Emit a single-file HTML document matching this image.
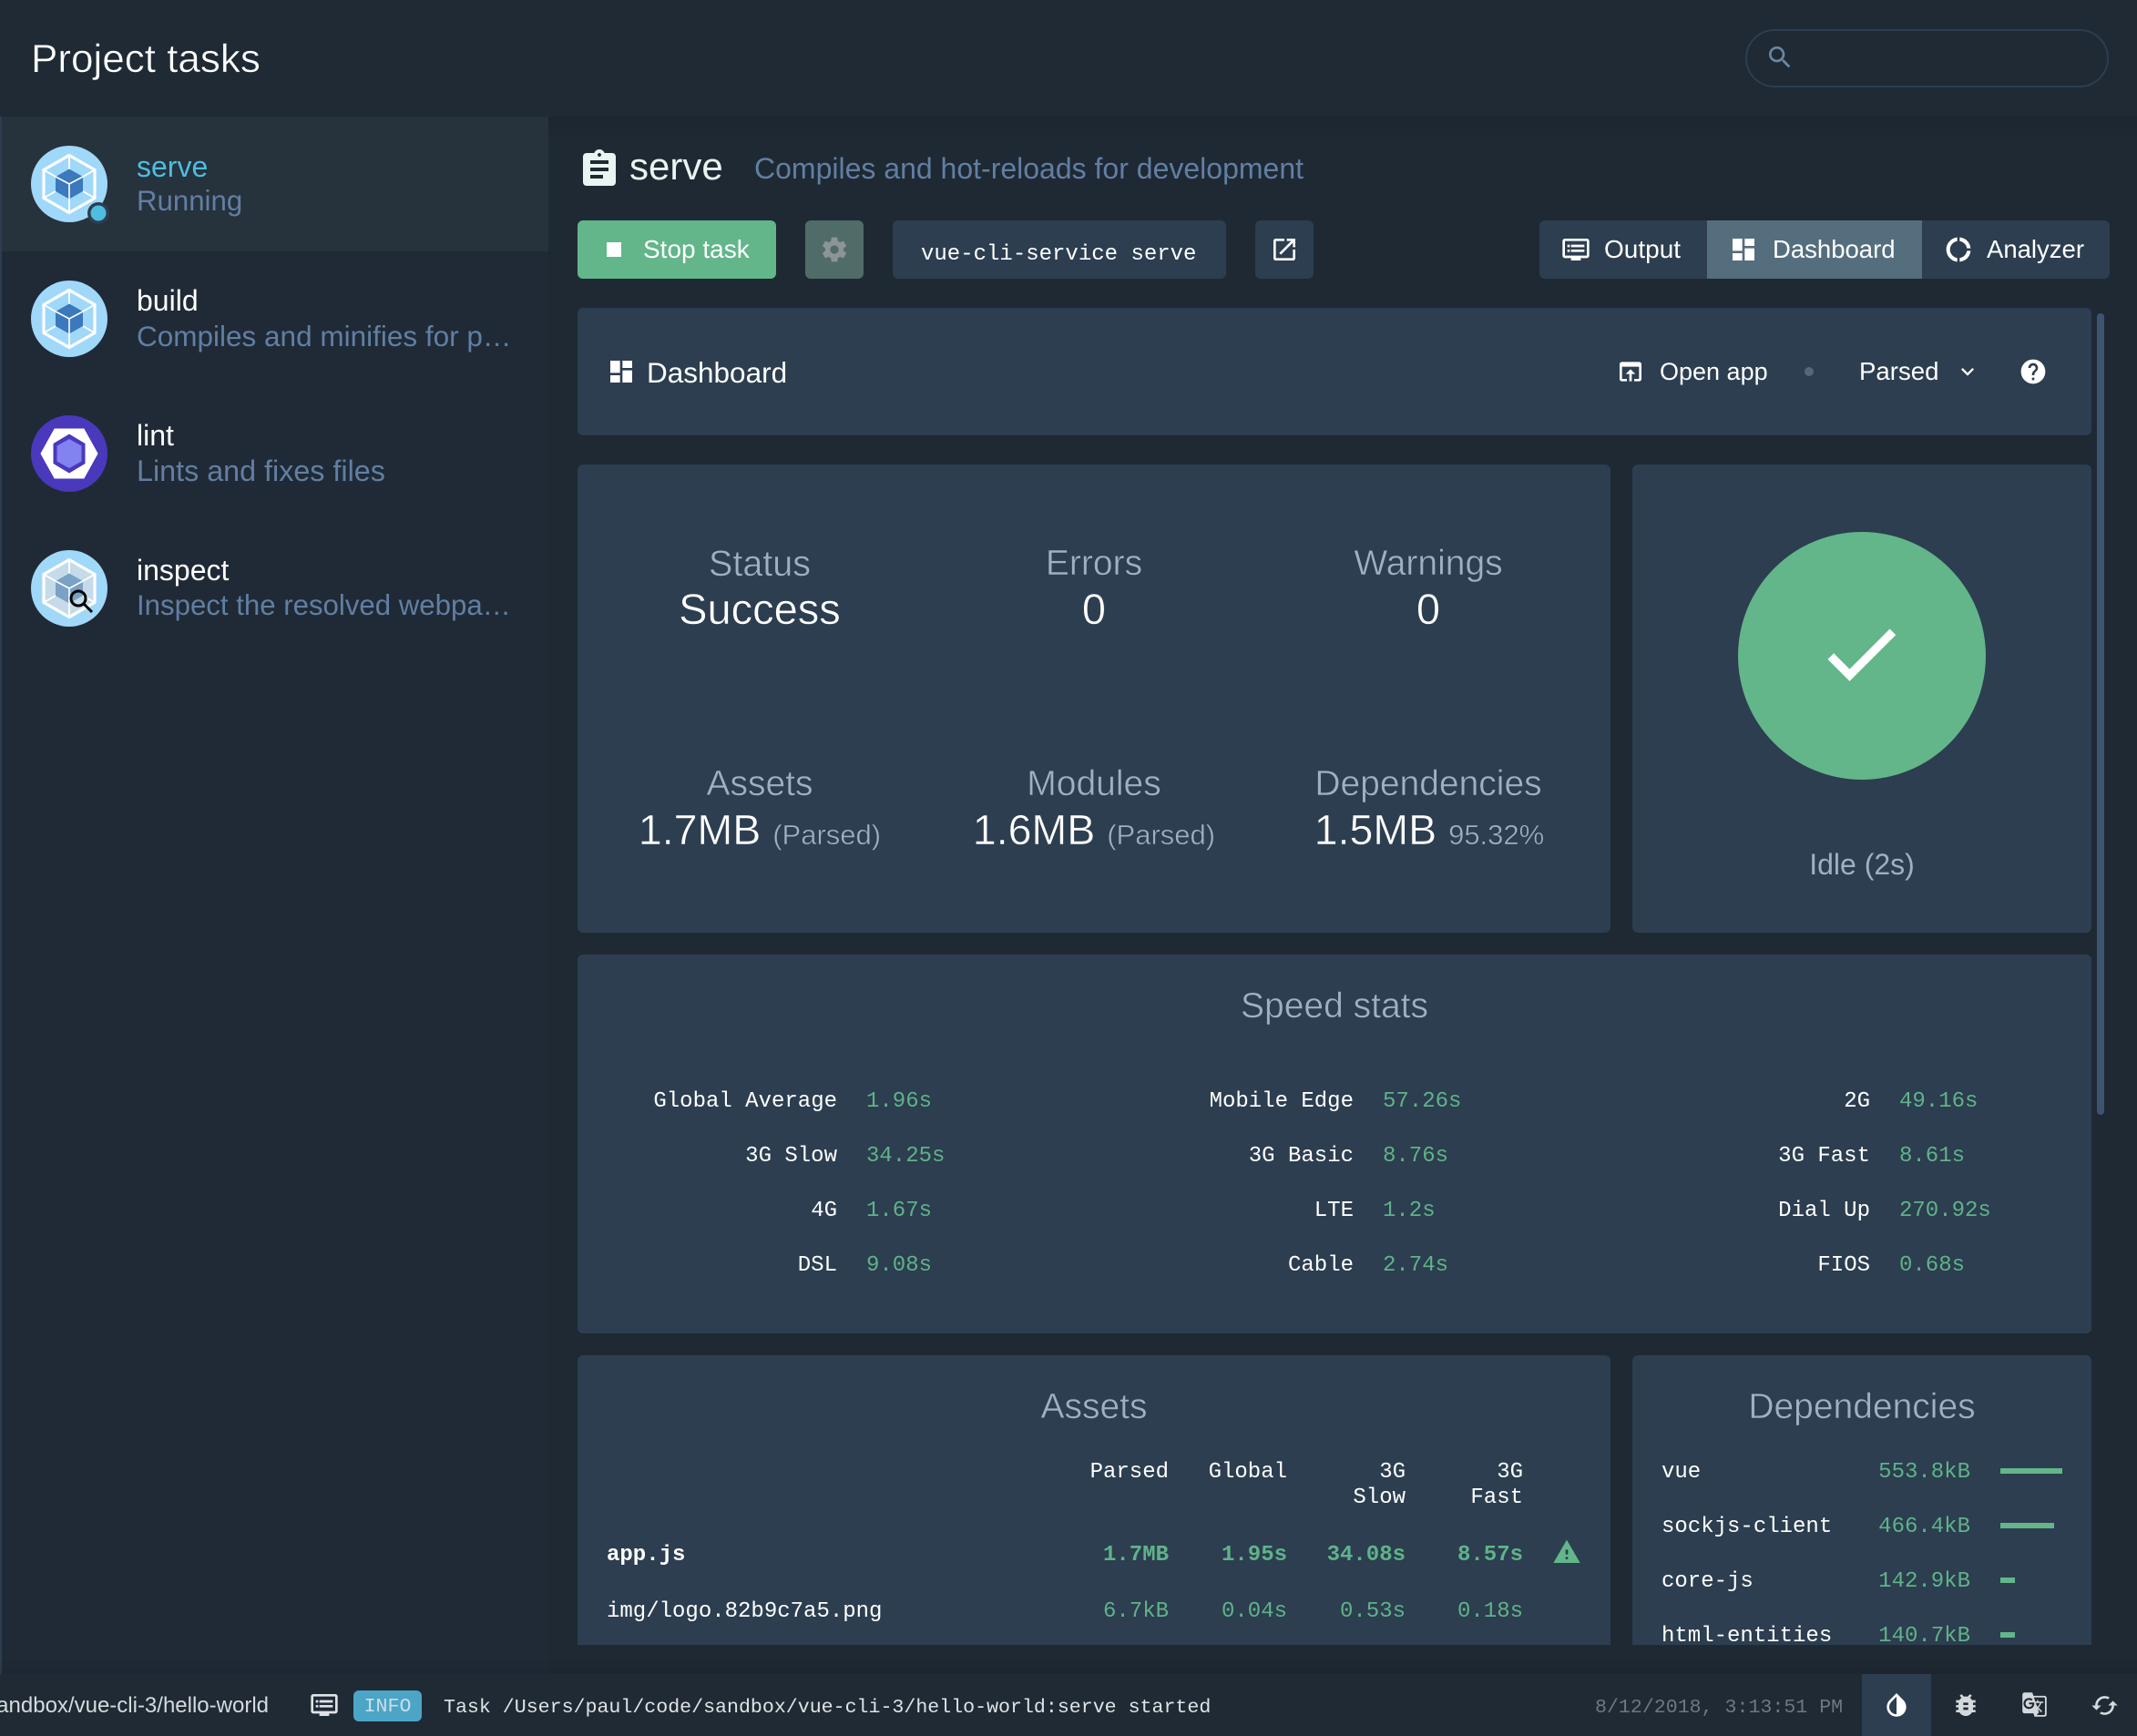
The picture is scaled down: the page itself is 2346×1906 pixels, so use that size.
<!DOCTYPE html>
<html><head><meta charset="utf-8"><title>Project tasks</title>
<style>
html,body{margin:0;padding:0;background:#1f2933;}
body{width:2346px;height:1906px;position:relative;overflow:hidden;font-family:"Liberation Sans",sans-serif;color:#fff;}
.a{position:absolute;white-space:nowrap;}
.c{text-align:center;}
.r{text-align:right;}
.m{font-family:"Liberation Mono",monospace;font-size:24px;line-height:28px;}
.p{background:#2c3e50;border-radius:6px;position:absolute;}
.g{color:#5fb388;}
.lab{font-size:39px;line-height:50px;color:#9fb0c2;-webkit-text-stroke:.5px #2c3e50;}
.val{font-size:47px;line-height:60px;color:#fff;-webkit-text-stroke:.5px #2c3e50;}
.val2{font-size:46.5px;line-height:60px;color:#fff;-webkit-text-stroke:.5px #2c3e50;}
.val2 span{font-size:31px;color:#9fb0c2;}
.h{font-size:39px;line-height:50px;color:#9fb0c2;-webkit-text-stroke:.5px #2c3e50;}
.tt{font-size:32px;line-height:40px;}
.st{font-size:32px;line-height:40px;color:#617fa3;}
.bt{font-size:28px;line-height:40px;}
svg{position:absolute;display:block;}
</style></head><body>

<!-- sidebar -->
<div class="a" style="left:0;top:128px;width:602px;height:1710px;background:#202a36;"></div>
<div class="a" style="left:0;top:128px;width:2px;height:1710px;background:#2c3e50;"></div>
<div class="a" style="left:2px;top:128px;width:600px;height:148px;background:#26323c;"></div>
<!-- shadows -->
<div class="a" style="left:602px;top:128px;width:1744px;height:24px;background:linear-gradient(#1c2530,#1f2933);"></div>
<div class="a" style="left:0;top:1818px;width:2346px;height:20px;background:linear-gradient(rgba(0,0,0,0),rgba(0,0,0,.08));"></div>

<!-- top bar -->
<div class="a" style="left:0;top:0;width:2346px;height:128px;background:#1f2a35;"></div>
<div class="a" style="left:34px;top:40px;font-size:44px;line-height:50px;color:#fff;-webkit-text-stroke:.5px #1f2a35;">Project tasks</div>
<div class="a" style="left:1916px;top:32px;width:395px;height:60px;border:2px solid #2c3e50;border-radius:32px;"></div>
<svg style="left:1938px;top:47px" width="32" height="32" viewBox="0 0 24 24" fill="#6a87a6"><path d="M15.5 14h-.79l-.28-.27C15.41 12.59 16 11.11 16 9.5 16 5.91 13.09 3 9.5 3S3 5.91 3 9.5 5.91 16 9.5 16c1.61 0 3.09-.59 4.23-1.57l.27.28v.79l5 4.99L20.49 19l-4.99-5zm-6 0C7.01 14 5 11.99 5 9.5S7.01 5 9.5 5 14 7.01 14 9.5 11.99 14 9.5 14z"/></svg>

<!-- sidebar icons -->
<svg style="left:34px;top:160px" width="88" height="88" viewBox="-42 -42 88 88">
<circle r="42" fill="#a0d8fa"/>
<g stroke="#fff" fill="none"><path d="M0-31.5L28-15.5V15.5L0 31.5-28 15.5V-15.5Z" stroke-width="3.2"/><path d="M0-31.5V-16M28-15.5L15-8M28 15.5L15 8M0 31.5V16M-28 15.5L-15 8M-28-15.5L-15-8" stroke-width="1.8"/></g>
<path d="M0-16.5L15-8V8L0 16.5-15 8V-8Z" fill="#3b78bc"/><path d="M-15-8L0 0 15-8M0 0V16.5" stroke="#fff" stroke-width="1.6" fill="none"/>
<circle cx="32" cy="32" r="12" fill="#2c3e50"/><circle cx="32" cy="32" r="8.5" fill="#4fbde0"/>
</svg>
<svg style="left:34px;top:308px" width="84" height="84" viewBox="-42 -42 84 84">
<circle r="42" fill="#a0d8fa"/>
<g stroke="#fff" fill="none"><path d="M0-31.5L28-15.5V15.5L0 31.5-28 15.5V-15.5Z" stroke-width="3.2"/><path d="M0-31.5V-16M28-15.5L15-8M28 15.5L15 8M0 31.5V16M-28 15.5L-15 8M-28-15.5L-15-8" stroke-width="1.8"/></g>
<path d="M0-16.5L15-8V8L0 16.5-15 8V-8Z" fill="#3b78bc"/><path d="M-15-8L0 0 15-8M0 0V16.5" stroke="#fff" stroke-width="1.6" fill="none"/>
</svg>
<svg style="left:34px;top:456px" width="84" height="84" viewBox="-42 -42 84 84">
<circle r="42" fill="#4a38bd"/>
<path d="M-31 0L-16-27H16L31 0 16 27H-16Z" fill="#fff" stroke="#fff" stroke-width="1"/>
<path d="M0-21.5L17.5-11V11L0 21.5-17.5 11V-11Z" fill="#4a38bd"/>
<path d="M0-16L13.5-8.5V8.5L0 16-13.5 8.5V-8.5Z" fill="#8282f0"/>
</svg>
<svg style="left:34px;top:604px" width="92" height="92" viewBox="-42 -42 92 92">
<circle r="42" fill="#a0d8fa"/>
<path d="M0-31.5L28-15.5V15.5L0 31.5-28 15.5V-15.5Z" fill="#c5dbe9"/>
<g stroke="#fff" fill="none"><path d="M0-31.5L28-15.5V15.5L0 31.5-28 15.5V-15.5Z" stroke-width="3.2"/><path d="M0-31.5V-16M28-15.5L15-8M28 15.5L15 8M0 31.5V16M-28 15.5L-15 8M-28-15.5L-15-8" stroke-width="1.8"/></g>
<path d="M0-16.5L15-8V8L0 16.5-15 8V-8Z" fill="#7aa1c6"/><path d="M-15-8L0 0 15-8M0 0V16.5" stroke="#fff" stroke-width="1.6" fill="none"/>
<circle cx="10" cy="11" r="8" fill="none" stroke="#000" stroke-width="3"/><path d="M16 17L25 26" stroke="#000" stroke-width="3"/>
</svg>

<!-- sidebar text -->
<div class="a tt" style="left:150px;top:163px;color:#4dbde0;">serve</div>
<div class="a st" style="left:150px;top:201px;font-size:31.2px;">Running</div>
<div class="a tt" style="left:150px;top:310px;">build</div>
<div class="a st" style="left:150px;top:349px;font-size:31.5px;">Compiles and minifies for p…</div>
<div class="a tt" style="left:150px;top:458px;">lint</div>
<div class="a st" style="left:150px;top:497px;font-size:32.3px;">Lints and fixes files</div>
<div class="a tt" style="left:150px;top:606px;">inspect</div>
<div class="a st" style="left:150px;top:645px;font-size:31.2px;">Inspect the resolved webpa…</div>

<!-- header -->
<svg style="left:634px;top:162px" width="48" height="48" viewBox="0 0 24 24" fill="#e8f5f0"><path d="M19 3h-4.18C14.4 1.84 13.3 1 12 1c-1.3 0-2.4.84-2.82 2H5c-1.1 0-2 .9-2 2v14c0 1.1.9 2 2 2h14c1.1 0 2-.9 2-2V5c0-1.1-.9-2-2-2zm-7 0c.55 0 1 .45 1 1s-.45 1-1 1-1-.45-1-1 .45-1 1-1zm2 14H7v-2h7v2zm3-4H7v-2h10v2zm0-4H7V7h10v2z"/></svg>
<div class="a" style="left:691px;top:158px;font-size:42px;line-height:50px;color:#e8f5f0;">serve</div>
<div class="a" style="left:828px;top:165px;font-size:32px;line-height:40px;color:#617fa3;">Compiles and hot-reloads for development</div>

<!-- action buttons -->
<div class="p" style="left:634px;top:242px;width:218px;height:64px;background:#62b68a;"></div>
<div class="a" style="left:666px;top:266px;width:16px;height:16px;background:#fff;"></div>
<div class="a bt" style="left:706px;top:254px;">Stop task</div>
<div class="p" style="left:884px;top:242px;width:64px;height:64px;background:#506c68;"></div>
<svg style="left:900px;top:258px" width="32" height="32" viewBox="0 0 24 24" fill="#8c9498"><path d="M19.43 12.98c.04-.32.07-.64.07-.98s-.03-.66-.07-.98l2.11-1.65c.19-.15.24-.42.12-.64l-2-3.46c-.12-.22-.39-.3-.61-.22l-2.49 1c-.52-.4-1.08-.73-1.69-.98l-.38-2.65C14.46 2.18 14.25 2 14 2h-4c-.25 0-.46.18-.49.42l-.38 2.65c-.61.25-1.17.59-1.69.98l-2.49-1c-.23-.09-.49 0-.61.22l-2 3.46c-.13.22-.07.49.12.64l2.11 1.65c-.04.32-.07.65-.07.98s.03.66.07.98l-2.11 1.65c-.19.15-.24.42-.12.64l2 3.46c.12.22.39.3.61.22l2.49-1c.52.4 1.08.73 1.69.98l.38 2.65c.03.24.24.42.49.42h4c.25 0 .46-.18.49-.42l.38-2.65c.61-.25 1.17-.59 1.69-.98l2.49 1c.23.09.49 0 .61-.22l2-3.46c.12-.22.07-.49-.12-.64l-2.11-1.65zM12 15.5c-1.93 0-3.5-1.57-3.5-3.5s1.57-3.5 3.5-3.5 3.5 1.57 3.5 3.5-1.57 3.5-3.5 3.5z"/></svg>
<div class="p" style="left:980px;top:242px;width:366px;height:64px;"></div>
<div class="a m" style="left:1011px;top:266px;">vue-cli-service serve</div>
<div class="p" style="left:1378px;top:242px;width:64px;height:64px;"></div>
<svg style="left:1394px;top:258px" width="32" height="32" viewBox="0 0 24 24" fill="#fff"><path d="M19 19H5V5h7V3H5c-1.11 0-2 .9-2 2v14c0 1.1.89 2 2 2h14c1.1 0 2-.9 2-2v-7h-2v7zM14 3v2h3.59l-9.83 9.83 1.41 1.41L19 6.41V10h2V3h-7z"/></svg>

<!-- tabs -->
<div class="p" style="left:1690px;top:242px;width:626px;height:64px;"></div>
<div class="a" style="left:1874px;top:242px;width:236px;height:64px;background:#546e7e;"></div>
<svg style="left:1714px;top:258px" width="32" height="32" viewBox="0 0 24 24" fill="#fff"><path d="M21 3H3c-1.1 0-2 .9-2 2v12c0 1.1.9 2 2 2h5v2h8v-2h5c1.1 0 1.99-.9 1.99-2L23 5c0-1.1-.9-2-2-2zm0 14H3V5h18v12zm-2-9H8v2h11V8zm0 4H8v2h11v-2zM7 8H5v2h2V8zm0 4H5v2h2v-2z"/></svg>
<div class="a bt" style="left:1761px;top:254px;">Output</div>
<svg style="left:1898px;top:258px" width="32" height="32" viewBox="0 0 24 24" fill="#fff"><path d="M3 13h8V3H3v10zm0 8h8v-6H3v6zm10 0h8V11h-8v10zm0-18v6h8V3h-8z"/></svg>
<div class="a" style="left:1946px;top:254px;font-size:27.5px;line-height:40px;">Dashboard</div>
<svg style="left:2134px;top:258px" width="32" height="32" viewBox="0 0 24 24" fill="#fff"><path d="M11 5.08V2c-5 .5-9 4.81-9 10s4 9.5 9 10v-3.08c-3-.48-6-3.19-6-6.92s3-6.44 6-6.92zM18.97 11H22c-.47-5-4-8.53-9-9v3.08C16 5.51 18.54 8 18.97 11zM13 18.92V22c5-.47 8.53-4 9-9h-3.03c-.43 3-2.97 5.49-5.97 5.92z"/></svg>
<div class="a" style="left:2181px;top:254px;font-size:27.5px;line-height:40px;">Analyzer</div>

<!-- scrollbar -->
<div class="a" style="left:2302px;top:344px;width:8px;height:880px;background:#3e5370;border-radius:4px;"></div>

<!-- dashboard panel -->
<div class="p" style="left:634px;top:338px;width:1662px;height:140px;"></div>
<svg style="left:666px;top:392px" width="32" height="32" viewBox="0 0 24 24" fill="#fff"><path d="M3 13h8V3H3v10zm0 8h8v-6H3v6zm10 0h8V11h-8v10zm0-18v6h8V3h-8z"/></svg>
<div class="a" style="left:710px;top:389px;font-size:31.5px;line-height:40px;">Dashboard</div>
<svg style="left:1774px;top:392px" width="32" height="32" viewBox="0 0 24 24" fill="#fff"><path d="M19 4H5c-1.11 0-2 .9-2 2v12c0 1.1.89 2 2 2h4v-2H5V8h14v10h-4v2h4c1.1 0 2-.9 2-2V6c0-1.1-.89-2-2-2zm-7 6l-4 4h3v6h2v-6h3l-4-4z"/></svg>
<div class="a" style="left:1822px;top:388px;font-size:27px;line-height:40px;">Open app</div>
<div class="a" style="left:1981px;top:403px;width:10px;height:10px;border-radius:50%;background:#566778;"></div>
<div class="a" style="left:2041px;top:388px;font-size:27.6px;line-height:40px;">Parsed</div>
<svg style="left:2146px;top:394px" width="28" height="28" viewBox="0 0 24 24" fill="#fff"><path d="M16.59 8.59L12 13.17 7.41 8.59 6 10l6 6 6-6z"/></svg>
<svg style="left:2216px;top:392px" width="32" height="32" viewBox="0 0 24 24" fill="#fff"><path d="M12 2C6.48 2 2 6.48 2 12s4.48 10 10 10 10-4.48 10-10S17.52 2 12 2zm1 17h-2v-2h2v2zm2.07-7.75l-.9.92C13.45 12.9 13 13.5 13 15h-2v-.5c0-1.1.45-2.1 1.17-2.83l1.24-1.26c.37-.36.59-.86.59-1.41 0-1.1-.9-2-2-2s-2 .9-2 2H8c0-2.21 1.79-4 4-4s4 1.79 4 4c0 .88-.36 1.68-.93 2.25z"/></svg>

<!-- status panel -->
<div class="p" style="left:634px;top:510px;width:1134px;height:514px;"></div>
<div class="a c lab" style="left:634px;top:594px;width:400px;font-size:39.5px;">Status</div>
<div class="a c lab" style="left:1001px;top:594px;width:400px;">Errors</div>
<div class="a c lab" style="left:1368px;top:594px;width:400px;">Warnings</div>
<div class="a c val" style="left:634px;top:639px;width:400px;">Success</div>
<div class="a c val" style="left:1001px;top:639px;width:400px;">0</div>
<div class="a c val" style="left:1368px;top:639px;width:400px;">0</div>
<div class="a c lab" style="left:634px;top:836px;width:400px;">Assets</div>
<div class="a c lab" style="left:1001px;top:836px;width:400px;">Modules</div>
<div class="a c lab" style="left:1368px;top:836px;width:400px;">Dependencies</div>
<div class="a c val2" style="left:634px;top:881px;width:400px;">1.7MB <span>(Parsed)</span></div>
<div class="a c val2" style="left:1001px;top:881px;width:400px;">1.6MB <span>(Parsed)</span></div>
<div class="a c val2" style="left:1369px;top:881px;width:400px;">1.5MB <span>95.32%</span></div>

<!-- idle panel -->
<div class="p" style="left:1792px;top:510px;width:504px;height:514px;"></div>
<div class="a" style="left:1908px;top:584px;width:272px;height:272px;border-radius:50%;background:#62b68a;"></div>
<svg style="left:1993px;top:668px" width="100" height="100" viewBox="0 0 24 24" fill="#fff" stroke="#fff" stroke-width=".25"><path d="M9 16.17L4.83 12l-1.41 1.41L9 19 21 7l-1.41-1.41z"/></svg>
<div class="a c" style="left:1792px;top:929px;width:504px;font-size:32px;line-height:40px;color:#9fb0c2;">Idle (2s)</div>

<!-- speed stats -->
<div class="p" style="left:634px;top:1048px;width:1662px;height:416px;"></div>
<div class="a c h" style="left:634px;top:1080px;width:1662px;">Speed stats</div>

<div class="a m r" style="left:619px;top:1196px;width:300px;">Global Average</div><div class="a m g" style="left:951px;top:1196px;">1.96s</div>
<div class="a m r" style="left:619px;top:1256px;width:300px;">3G Slow</div><div class="a m g" style="left:951px;top:1256px;">34.25s</div>
<div class="a m r" style="left:619px;top:1316px;width:300px;">4G</div><div class="a m g" style="left:951px;top:1316px;">1.67s</div>
<div class="a m r" style="left:619px;top:1376px;width:300px;">DSL</div><div class="a m g" style="left:951px;top:1376px;">9.08s</div>

<div class="a m r" style="left:1186px;top:1196px;width:300px;">Mobile Edge</div><div class="a m g" style="left:1518px;top:1196px;">57.26s</div>
<div class="a m r" style="left:1186px;top:1256px;width:300px;">3G Basic</div><div class="a m g" style="left:1518px;top:1256px;">8.76s</div>
<div class="a m r" style="left:1186px;top:1316px;width:300px;">LTE</div><div class="a m g" style="left:1518px;top:1316px;">1.2s</div>
<div class="a m r" style="left:1186px;top:1376px;width:300px;">Cable</div><div class="a m g" style="left:1518px;top:1376px;">2.74s</div>

<div class="a m r" style="left:1753px;top:1196px;width:300px;">2G</div><div class="a m g" style="left:2085px;top:1196px;">49.16s</div>
<div class="a m r" style="left:1753px;top:1256px;width:300px;">3G Fast</div><div class="a m g" style="left:2085px;top:1256px;">8.61s</div>
<div class="a m r" style="left:1753px;top:1316px;width:300px;">Dial Up</div><div class="a m g" style="left:2085px;top:1316px;">270.92s</div>
<div class="a m r" style="left:1753px;top:1376px;width:300px;">FIOS</div><div class="a m g" style="left:2085px;top:1376px;">0.68s</div>

<!-- assets panel -->
<div class="a" style="left:634px;top:1488px;width:1134px;height:318px;background:#2c3e50;border-radius:6px 6px 0 0;overflow:hidden;">
  <div class="a c h" style="left:0;top:32px;width:1134px;">Assets</div>
  <div class="a m r" style="left:449px;top:115px;width:200px;">Parsed</div>
  <div class="a m r" style="left:579px;top:115px;width:200px;">Global</div>
  <div class="a m r" style="left:709px;top:115px;width:200px;">3G<br>Slow</div>
  <div class="a m r" style="left:838px;top:115px;width:200px;">3G<br>Fast</div>
  <div class="a m" style="left:32px;top:206px;font-weight:bold;">app.js</div>
  <div class="a m r g" style="left:449px;top:206px;width:200px;font-weight:bold;">1.7MB</div>
  <div class="a m r g" style="left:579px;top:206px;width:200px;font-weight:bold;">1.95s</div>
  <div class="a m r g" style="left:709px;top:206px;width:200px;font-weight:bold;">34.08s</div>
  <div class="a m r g" style="left:838px;top:206px;width:200px;font-weight:bold;">8.57s</div>
  <svg style="left:1070px;top:200px" width="32" height="32" viewBox="0 0 24 24" fill="#62b68a"><path d="M1 21h22L12 2 1 21zm12-3h-2v-2h2v2zm0-4h-2v-4h2v4z"/></svg>
  <div class="a m" style="left:32px;top:268px;">img/logo.82b9c7a5.png</div>
  <div class="a m r g" style="left:449px;top:268px;width:200px;">6.7kB</div>
  <div class="a m r g" style="left:579px;top:268px;width:200px;">0.04s</div>
  <div class="a m r g" style="left:709px;top:268px;width:200px;">0.53s</div>
  <div class="a m r g" style="left:838px;top:268px;width:200px;">0.18s</div>
</div>

<!-- dependencies panel -->
<div class="a" style="left:1792px;top:1488px;width:504px;height:318px;background:#2c3e50;border-radius:6px 6px 0 0;overflow:hidden;">
  <div class="a c h" style="left:0;top:32px;width:504px;">Dependencies</div>
  <div class="a m" style="left:32px;top:115px;">vue</div>
  <div class="a m r g" style="left:171px;top:115px;width:200px;">553.8kB</div>
  <div class="a" style="left:404px;top:124px;width:68px;height:6px;background:#62b68a;"></div>
  <div class="a m" style="left:32px;top:175px;">sockjs-client</div>
  <div class="a m r g" style="left:171px;top:175px;width:200px;">466.4kB</div>
  <div class="a" style="left:404px;top:184px;width:59px;height:6px;background:#62b68a;"></div>
  <div class="a m" style="left:32px;top:235px;">core-js</div>
  <div class="a m r g" style="left:171px;top:235px;width:200px;">142.9kB</div>
  <div class="a" style="left:404px;top:244px;width:16px;height:6px;background:#62b68a;"></div>
  <div class="a m" style="left:32px;top:295px;">html-entities</div>
  <div class="a m r g" style="left:171px;top:295px;width:200px;">140.7kB</div>
  <div class="a" style="left:404px;top:304px;width:16px;height:6px;background:#62b68a;"></div>
</div>

<!-- footer -->
<div class="a" style="left:0;top:1838px;width:2346px;height:68px;background:#1f2a35;overflow:hidden;">
  <div class="a r" style="left:-300px;top:17px;width:595px;font-size:24px;line-height:36px;color:#d5dadd;">/Users/paul/code/sandbox/vue-cli-3/hello-world</div>
  <svg style="left:340px;top:18px" width="32" height="32" viewBox="0 0 24 24" fill="#dfe3e6"><path d="M21 3H3c-1.1 0-2 .9-2 2v12c0 1.1.9 2 2 2h5v2h8v-2h5c1.1 0 1.99-.9 1.99-2L23 5c0-1.1-.9-2-2-2zm0 14H3V5h18v12zm-2-9H8v2h11V8zm0 4H8v2h11v-2zM7 8H5v2h2V8zm0 4H5v2h2v-2z"/></svg>
  <div class="a c" style="left:388px;top:18px;width:75px;height:34px;background:#4ca5c6;border-radius:6px;font-family:'Liberation Mono',monospace;font-size:21.6px;line-height:37px;color:#c9dfe9;">INFO</div>
  <div class="a" style="left:487px;top:22px;font-family:'Liberation Mono',monospace;font-size:21.6px;line-height:30px;color:#dfe3e6;">Task /Users/paul/code/sandbox/vue-cli-3/hello-world:serve started</div>
  <div class="a" style="left:1751px;top:22px;font-family:'Liberation Mono',monospace;font-size:21.6px;line-height:30px;color:#6d7883;">8/12/2018, 3:13:51 PM</div>
  <div class="a" style="left:2044px;top:0;width:76px;height:68px;background:#2c3e50;"></div>
  <svg style="left:2066px;top:18px" width="32" height="32" viewBox="0 0 24 24" fill="#fff"><path d="M17.66 7.93L12 2.27 6.34 7.93c-3.12 3.12-3.12 8.19 0 11.31C7.9 20.8 9.95 21.58 12 21.58c2.05 0 4.1-.78 5.66-2.34 3.12-3.12 3.12-8.19 0-11.31zM12 19.59c-1.6 0-3.11-.62-4.24-1.76C6.62 16.69 6 15.19 6 13.59s.62-3.11 1.76-4.24L12 5.1v14.49z"/></svg>
  <svg style="left:2142px;top:18px" width="32" height="32" viewBox="0 0 24 24" fill="#d5d9dc"><path d="M20 8h-2.81c-.45-.78-1.07-1.45-1.82-1.96L17 4.41 15.59 3l-2.17 2.17C12.96 5.06 12.49 5 12 5c-.49 0-.96.06-1.41.17L8.41 3 7 4.41l1.62 1.63C7.88 6.55 7.26 7.22 6.81 8H4v2h2.09c-.05.33-.09.66-.09 1v1H4v2h2v1c0 .34.04.67.09 1H4v2h2.81c1.04 1.79 2.97 3 5.19 3s4.15-1.21 5.19-3H20v-2h-2.09c.05-.33.09-.66.09-1v-1h2v-2h-2v-1c0-.34-.04-.67-.09-1H20V8zm-6 8h-4v-2h4v2zm0-4h-4v-2h4v2z"/></svg>
  <svg style="left:2219px;top:19px" width="29" height="29" viewBox="0 0 24 24" fill="#d5d9dc"><path d="M21 4H11l-1-3H3c-1.1 0-2 .9-2 2v15c0 1.1.9 2 2 2h8l1 3h9c1.1 0 2-.9 2-2V6c0-1.1-.9-2-2-2zM7 16c-2.76 0-5-2.24-5-5s2.24-5 5-5c1.35 0 2.48.5 3.35 1.3L9.03 8.57c-.38-.36-1.04-.78-2.03-.78-1.74 0-3.15 1.44-3.15 3.21S5.26 14.21 7 14.21c2.01 0 2.84-1.44 2.92-2.41H7v-1.71h4.68c.07.31.12.61.12 1.02C11.8 13.97 9.89 16 7 16zm6.17-5.42h3.71c-.43 1.25-1.11 2.43-2.05 3.47-.31-.35-.6-.72-.86-1.1l-.8-2.37zm8.33 9.92c0 .55-.45 1-1 1H14l2-2.5-1.04-3.1 3.1 3.1.92-.92-3.3-3.25.02-.02c1.13-1.25 1.93-2.69 2.4-4.22H20v-1.3h-4.53V8h-1.29v1.29h-1.44L11.46 5.5h9.04c.55 0 1 .45 1 1v14z"/></svg>
  <svg style="left:2295px;top:19px" width="31" height="31" viewBox="0 0 24 24" fill="#d5d9dc"><path d="M19 8l-4 4h3c0 3.31-2.69 6-6 6-1.01 0-1.97-.25-2.8-.7l-1.46 1.46C8.97 19.54 10.43 20 12 20c4.42 0 8-3.58 8-8h3l-4-4zM6 12c0-3.31 2.69-6 6-6 1.01 0 1.97.25 2.8.7l1.46-1.46C15.03 4.46 13.57 4 12 4c-4.42 0-8 3.58-8 8H1l4 4 4-4H6z"/></svg>
</div>
</body></html>
